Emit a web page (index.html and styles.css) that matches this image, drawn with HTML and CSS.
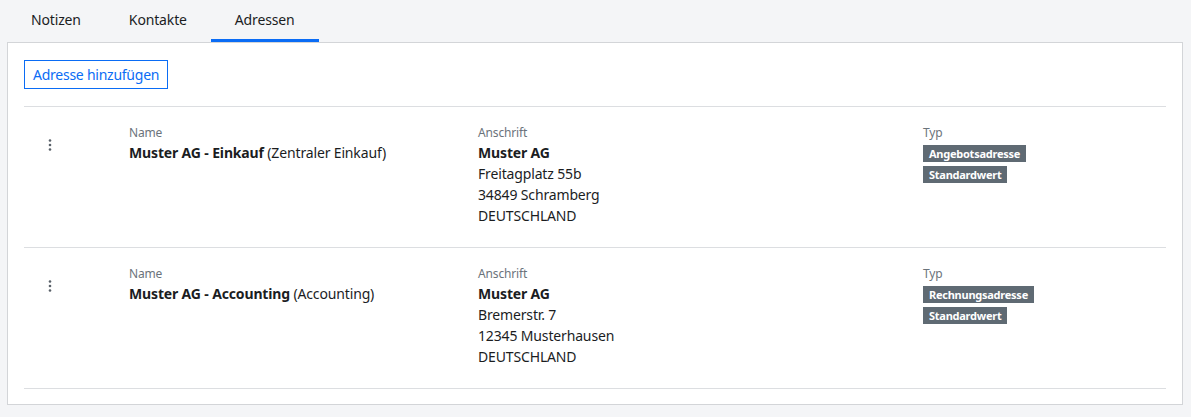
FILE: index.html
```html
<!DOCTYPE html>
<html lang="de">
  <head>
    <meta charset="UTF-8" />
    <meta name="viewport" content="width=device-width, initial-scale=1.0" />
    <title>Adressen</title>
    <link rel="stylesheet" href="styles.css">
  </head>
  <body>
    <nav class="tabs">
      <a class="tab" href="#">Notizen</a>
      <a class="tab" href="#">Kontakte</a>
      <a class="tab active" href="#">Adressen</a>
    </nav>
    <div class="panel">
      <button class="btn-outline" type="button">Adresse hinzufügen</button>
      <div class="address-list">
        <div class="address-row">
          <div class="col-actions">
            <button class="kebab" type="button" aria-label="Aktionen">
              <svg width="4" height="12" viewBox="0 0 4 12"><circle cx="2" cy="1.5" r="1.3"/><circle cx="2" cy="6" r="1.3"/><circle cx="2" cy="10.5" r="1.3"/></svg>
            </button>
          </div>
          <div class="col">
            <div class="label">Name</div>
            <div class="value"><strong>Muster AG - Einkauf</strong> (Zentraler Einkauf)</div>
          </div>
          <div class="col">
            <div class="label">Anschrift</div>
            <div class="value">
              <strong>Muster AG</strong><br>
              Freitagplatz 55b<br>
              34849 Schramberg<br>
              DEUTSCHLAND
            </div>
          </div>
          <div class="col">
            <div class="label">Typ</div>
            <div class="badges">
              <span class="badge">Angebotsadresse</span>
              <span class="badge">Standardwert</span>
            </div>
          </div>
        </div>
        <div class="address-row">
          <div class="col-actions">
            <button class="kebab" type="button" aria-label="Aktionen">
              <svg width="4" height="12" viewBox="0 0 4 12"><circle cx="2" cy="1.5" r="1.3"/><circle cx="2" cy="6" r="1.3"/><circle cx="2" cy="10.5" r="1.3"/></svg>
            </button>
          </div>
          <div class="col">
            <div class="label">Name</div>
            <div class="value"><strong>Muster AG - Accounting</strong> (Accounting)</div>
          </div>
          <div class="col">
            <div class="label">Anschrift</div>
            <div class="value">
              <strong>Muster AG</strong><br>
              Bremerstr. 7<br>
              12345 Musterhausen<br>
              DEUTSCHLAND
            </div>
          </div>
          <div class="col">
            <div class="label">Typ</div>
            <div class="badges">
              <span class="badge">Rechnungsadresse</span>
              <span class="badge">Standardwert</span>
            </div>
          </div>
        </div>
      </div>
    </div>
  </body>
</html>
```

FILE: styles.css
```css
body {
  margin: 0;
  background-color: #f4f5f7;
  color: #1b1d1f;
  font-family: "Noto Sans", "Open Sans", sans-serif;
  font-size: 14px;
  letter-spacing: -0.15px;
}

.tabs {
  display: flex;
  padding-left: 7px;
  height: 42px;
}

.tab {
  display: block;
  padding: 0 24px;
  line-height: 39px;
  border-bottom: 3px solid transparent;
  color: #1b1d1f;
  text-decoration: none;
}

.tab.active {
  border-bottom-color: #0a6cf5;
}

.panel {
  margin: 0 8px 12px 7px;
  padding: 17px 16px 15px 16px;
  background-color: #fff;
  border: 1px solid #d3d5d8;
}

.btn-outline {
  display: block;
  height: 29px;
  padding: 0 8px;
  margin-bottom: 17px;
  font-family: inherit;
  font-size: 14px;
  letter-spacing: -0.25px;
  color: #0a6cf5;
  background: #fff;
  border: 1px solid #0a6cf5;
  border-radius: 0;
  cursor: pointer;
}

.address-list {
  border-top: 1px solid #dcdee1;
}

.address-row {
  display: grid;
  grid-template-columns: 105px 349px 445px 1fr;
  padding: 16px 0 21px;
  border-bottom: 1px solid #dcdee1;
}

.col-actions {
  padding-top: 12px;
}

.kebab {
  display: block;
  width: 20px;
  height: 20px;
  margin-left: 16px;
  padding: 0;
  border: none;
  background: none;
  cursor: pointer;
}

.kebab svg {
  display: block;
  margin: 0 auto;
  fill: #5a6169;
}

.label {
  font-size: 12px;
  line-height: 19px;
  color: #6b737b;
}

.value {
  line-height: 21px;
}

.value strong {
  font-weight: 700;
}

.badges {
  display: flex;
  flex-direction: column;
  align-items: flex-start;
  gap: 4px;
  margin-top: 3px;
}

.badge {
  display: inline-block;
  padding: 0 6px;
  line-height: 17px;
  font-size: 11px;
  font-weight: 700;
  letter-spacing: -0.25px;
  color: #fff;
  background-color: #5f6a73;
}
```
